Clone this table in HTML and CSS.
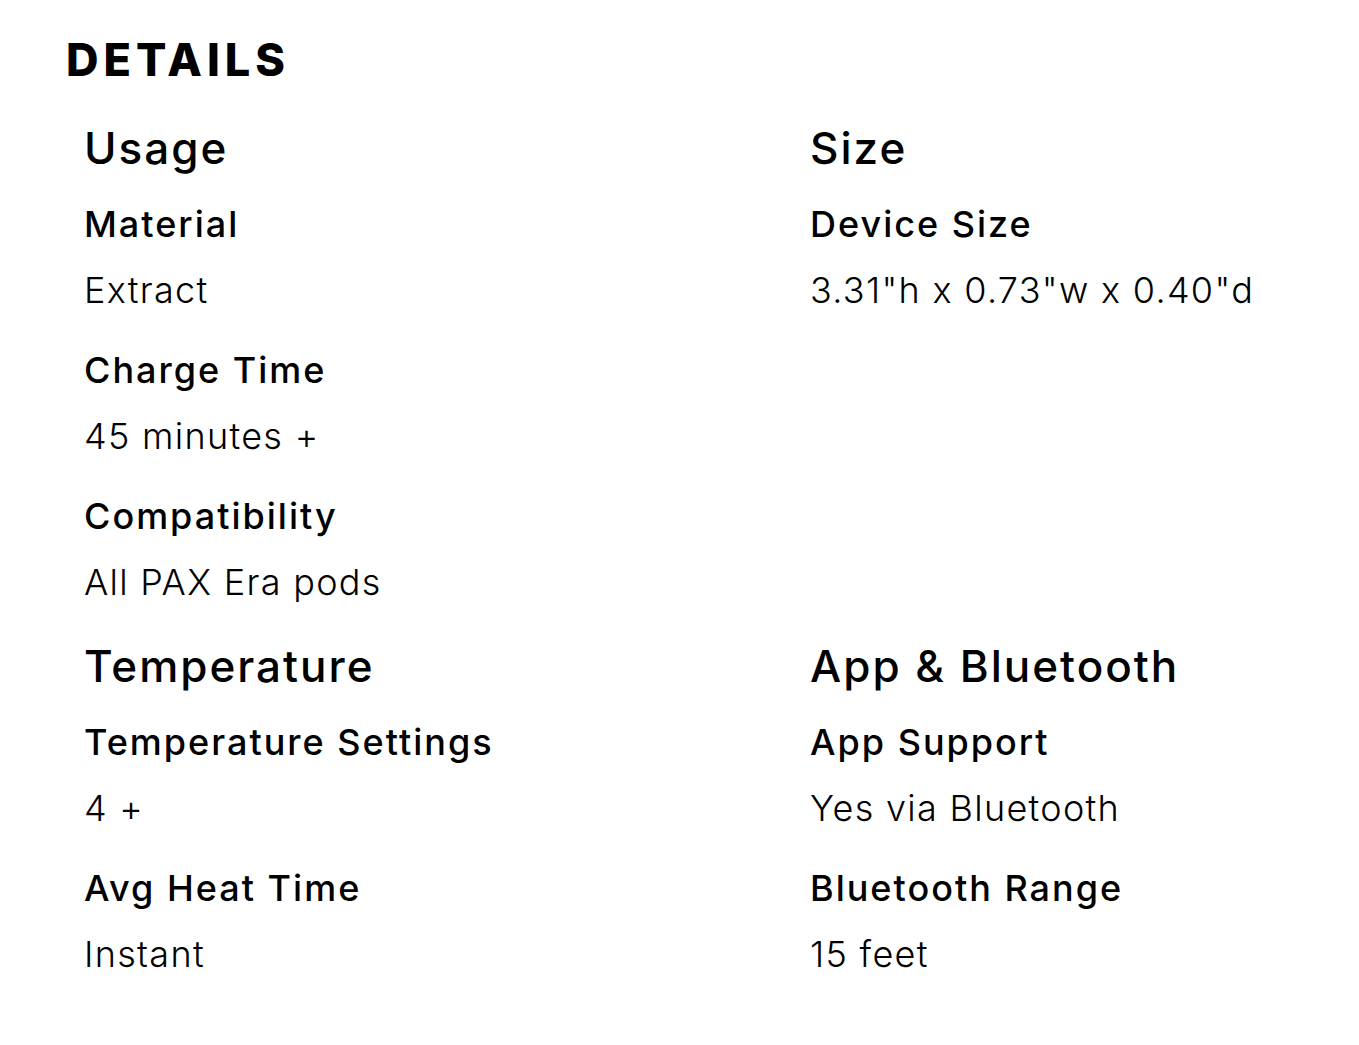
FILE: index.html
```html
<!DOCTYPE html>
<html lang="en">
<head>
<meta charset="utf-8">
<title>Details</title>
<link rel="stylesheet" href="styles.css">
</head>
<body>
<main class="page">
  <h2 class="heading">DETAILS</h2>
  <div class="grid">
    <section class="group">
      <h3 class="group-title">Usage</h3>
      <dl class="items">
        <div class="item"><dt class="label">Material</dt><dd class="value">Extract</dd></div>
        <div class="item"><dt class="label">Charge Time</dt><dd class="value">45 minutes +</dd></div>
        <div class="item"><dt class="label">Compatibility</dt><dd class="value">All PAX Era pods</dd></div>
      </dl>
    </section>
    <section class="group">
      <h3 class="group-title">Size</h3>
      <dl class="items">
        <div class="item"><dt class="label">Device Size</dt><dd class="value">3.31"h x 0.73"w x 0.40"d</dd></div>
      </dl>
    </section>
    <section class="group">
      <h3 class="group-title">Temperature</h3>
      <dl class="items">
        <div class="item"><dt class="label">Temperature Settings</dt><dd class="value">4 +</dd></div>
        <div class="item"><dt class="label">Avg Heat Time</dt><dd class="value">Instant</dd></div>
      </dl>
    </section>
    <section class="group">
      <h3 class="group-title">App &amp; Bluetooth</h3>
      <dl class="items">
        <div class="item"><dt class="label">App Support</dt><dd class="value">Yes via Bluetooth</dd></div>
        <div class="item"><dt class="label">Bluetooth Range</dt><dd class="value">15 feet</dd></div>
      </dl>
    </section>
  </div>
</main>
</body>
</html>
```

FILE: styles.css
```css
html, body {
  margin: 0;
  padding: 0;
  background: #fff;
}
body {
  font-family: "Inter", "Lato", sans-serif;
  color: #000;
}
.page {
  padding: 37px 0 0 66px;
}
.heading {
  margin: 0 0 37px 0;
  font-size: 45px;
  line-height: 46px;
  font-weight: 800;
  letter-spacing: 5px;
}
.grid {
  margin-left: 18px;
  display: grid;
  grid-template-columns: 726px 1fr;
  row-gap: 23px;
}
.group-title {
  margin: 0 0 15px 0;
  font-size: 44px;
  line-height: 56px;
  font-weight: 500;
  letter-spacing: 2px;
}
.items {
  margin: 0;
  display: flex;
  flex-direction: column;
  gap: 14px;
}
.label {
  font-size: 36px;
  line-height: 66px;
  font-weight: 500;
  letter-spacing: 2px;
}
.value {
  margin: 0;
  font-size: 36px;
  line-height: 66px;
  font-weight: 300;
  letter-spacing: 1.3px;
}
```
